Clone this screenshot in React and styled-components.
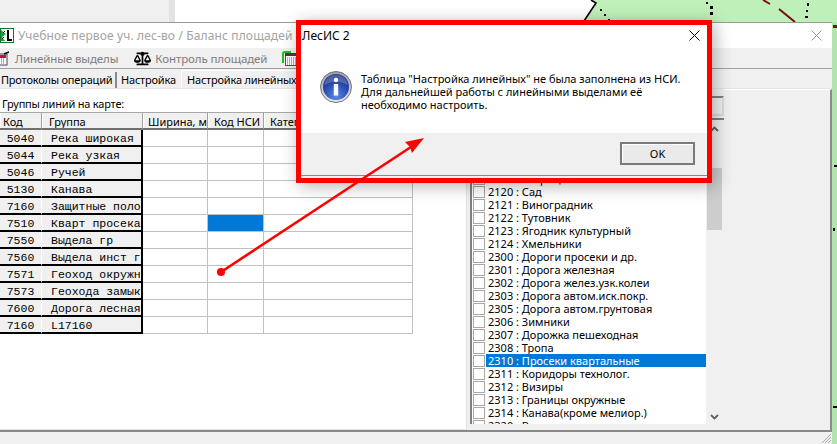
import React from 'react';
import styled, { createGlobalStyle } from 'styled-components';
import { FaBalanceScale } from 'react-icons/fa';

const uiFont = '"Noto Sans", "Open Sans", sans-serif';
const monoFont = '"Liberation Mono", monospace';

const GlobalStyle = createGlobalStyle`
  html, body {
    margin: 0;
    padding: 0;
    overflow: hidden;
    background: #fff;
  }
  * {
    box-sizing: border-box;
  }
`;

const Page = styled.div`
  position: relative;
  width: 837px;
  height: 444px;
  display: flex;
  flex-direction: column;
  overflow: hidden;
  font-family: ${uiFont};
  font-size: 11px;
  color: #000;
`;

const TopBar = styled.div`
  height: 22px;
  display: flex;
  flex: none;
`;

const LeftPane = styled.div`
  width: 169px;
  background: #f0f0f0;
`;

const Splitter = styled.div`
  width: 6px;
  background: #e3e3e3;
`;

const MapPane = styled.div`
  flex: 1;
  background: #fff;
  svg {
    display: block;
  }
`;

const Desktop = styled.div`
  flex: 1;
  display: flex;
  min-height: 0;
`;

const MapStrip = styled.div`
  width: 5px;
  background: #b0e5ad;
  svg {
    display: block;
  }
`;

const Window = styled.div`
  width: 832px;
  display: flex;
  flex-direction: column;
  background: #f0f0f0;
  border-top: 1px solid #9a9a9a;
`;

const TitleBar = styled.div`
  height: 25px;
  flex: none;
  background: #fff;
  display: flex;
  align-items: center;
  color: #a3a3a3;
  font-size: 12px;
  letter-spacing: 0.13px;
  padding-right: 10px;
  span {
    margin-left: 4px;
  }
  svg:last-child {
    margin-left: auto;
  }
`;

const Toolbar = styled.div`
  height: 21px;
  flex: none;
  display: flex;
  align-items: center;
  border-bottom: 1px solid #a0a0a0;
  color: #7d7d7d;
  font-size: 11.5px;
  letter-spacing: -0.1px;
`;

const ToolItem = styled.div`
  display: flex;
  align-items: center;
  gap: ${(p) => p.$gap}px;
  margin-left: ${(p) => p.$left}px;
  white-space: nowrap;
`;

const Tabs = styled.div`
  height: 20px;
  flex: none;
  display: flex;
  align-items: flex-start;
  overflow: hidden;
  letter-spacing: -0.2px;
  border-bottom: 1px solid #e4e4e4;
`;

const Tab = styled.div`
  width: ${(p) => p.$width}px;
  height: ${(p) => (p.$active ? 19 : 18)}px;
  margin-top: ${(p) => (p.$active ? 1 : 3)}px;
  padding-left: ${(p) => p.$pad}px;
  padding-top: ${(p) => (p.$active ? 1 : 0)}px;
  line-height: 16px;
  white-space: nowrap;
  background: #f0f0f0;
  border-left: ${(p) => (p.$active ? '1px solid #fff' : 'none')};
  border-top: ${(p) => (p.$active ? '1px solid #fff' : 'none')};
  border-right: ${(p) => (p.$active ? '1px solid #ddd' : p.$plain ? 'none' : '2px solid #8a8a8a')};
`;

const Panels = styled.div`
  flex: 1;
  display: flex;
  min-height: 0;
`;

const GridPanel = styled.div`
  width: 467px;
  height: 100%;
  background: #fff;
  border-right: 1px solid #e2e2e2;
  border-bottom: 1px solid #e2e2e2;
  display: flex;
  flex-direction: column;
`;

const Caption = styled.div`
  height: 23px;
  padding: 7px 0 0 2px;
  line-height: 15px;
  letter-spacing: -0.2px;
`;

const GridRow = styled.div`
  display: grid;
  grid-template-columns: 42px 101px 65px 56px 149px;
  height: ${(p) => (p.$head ? 18 : 17)}px;
`;

const HeadCell = styled.div`
  background: #f0f0f0;
  border-top: 1px solid #a8a8a8;
  border-bottom: 2px solid #707070;
  border-right: 1px solid #a0a0a0;
  box-shadow: inset 1px 0 0 #fff;
  padding-left: ${(p) => p.$pad}px;
  line-height: 17px;
  white-space: nowrap;
  overflow: hidden;
`;

const FixedCell = styled.div`
  background: #f0f0f0;
  font-family: ${monoFont};
  font-size: 11.5px;
  line-height: 17px;
  white-space: nowrap;
  overflow: hidden;
  border-bottom: 2px solid #000;
  text-align: ${(p) => (p.$code ? 'center' : 'left')};
  padding-left: ${(p) => (p.$code ? 0 : 9)}px;
  border-right: ${(p) => (p.$code ? '1px solid #fff' : '2px solid #000')};
`;

const DataCell = styled.div`
  background: ${(p) => (p.$selected ? '#0078d7' : '#fff')};
  border-right: 1px solid #c0c0c0;
  border-bottom: 1px solid #c0c0c0;
`;

const FilterPane = styled.div`
  width: 257px;
  height: 100%;
  padding: 7px 0 6px 3px;
  display: flex;
  flex-direction: column;
  gap: 2px;
`;

const FilterInput = styled.div`
  height: 20px;
  flex: none;
  background: #f0f0f0;
  border: 2px solid #dcdcdc;
  border-top-color: #808080;
  border-left-color: #808080;
`;

const ListBox = styled.div`
  flex: 1;
  min-height: 0;
  display: flex;
  overflow: hidden;
  background: #fff;
  border-left: 2px solid #808080;
  border-top: 2px solid #808080;
`;

const Items = styled.div`
  flex: 1;
  min-width: 0;
  padding: 52px 0 0 1px;
  overflow: hidden;
`;

const Item = styled.div`
  height: 13px;
  display: flex;
  align-items: center;
  gap: 1px;
  line-height: 13px;
  white-space: nowrap;
`;

const CheckBox = styled.i`
  width: 12px;
  height: 12px;
  flex: none;
  background: #fff;
  border: 1px solid #a6a6a6;
`;

const ItemLabel = styled.div`
  flex: 1;
  height: 13px;
  padding-left: 2px;
  background: ${(p) => (p.$selected ? '#0078d7' : 'transparent')};
  color: ${(p) => (p.$selected ? '#fff' : '#000')};
`;

const ScrollBar = styled.div`
  width: 18px;
  flex: none;
  display: flex;
  flex-direction: column;
  align-items: center;
  padding: 6px 2px 4px 1px;
  background: #f0f0f0;
`;

const Thumb = styled.div`
  width: 15px;
  height: 62px;
  margin-top: 36px;
  background: #cdcdcd;
`;

const ArrowButton = styled.div`
  line-height: 0;
  margin-top: ${(p) => (p.$down ? 'auto' : 0)};
`;

const SidePane = styled.div`
  flex: 1;
  height: 100%;
  border-top: 1px solid #fff;
  border-right: 2px solid #8c8c8c;
`;

const StatusBar = styled.div`
  height: 14px;
  flex: none;
  display: flex;
  justify-content: flex-end;
  align-items: flex-end;
  border-top: 2px solid #8a8a8a;
`;

const Dialog = styled.div`
  position: absolute;
  left: 296px;
  top: 20px;
  width: 416px;
  height: 163px;
  border: 5px solid #ff0000;
  background: #f0f0f0;
  display: flex;
  flex-direction: column;
  box-shadow: 3px 3px 16px rgba(0, 0, 0, 0.3);
`;

const DialogBody = styled.div`
  height: 108px;
  flex: none;
  background: #fff;
`;

const DialogTitle = styled.div`
  height: 21px;
  display: flex;
  align-items: center;
  justify-content: space-between;
  padding: 0 7px 0 1px;
  font-size: 12px;
`;

const Message = styled.div`
  display: flex;
  gap: 9px;
  margin: 25px 0 0 19px;
  svg {
    flex: none;
  }
`;

const MessageText = styled.div`
  line-height: 13px;
  font-size: 11px;
  margin-top: 1px;
`;

const DialogFooter = styled.div`
  height: 43px;
  flex: none;
  display: flex;
  justify-content: flex-end;
  padding: 9px 12px 0 0;
  border-bottom: 1px solid #8a8a8a;
`;

const OkButton = styled.div`
  width: 75px;
  height: 23px;
  background: #eaeaea;
  border: 2px solid #7a7a7a;
  box-shadow: inset 1px 1px 0 #fff;
  text-align: center;
  line-height: 19px;
  font-size: 11px;
`;

const Overlay = styled.svg`
  position: absolute;
  left: 0;
  top: 0;
  pointer-events: none;
`;

const rows = [
  ['5040', 'Река широкая'],
  ['5044', 'Река узкая'],
  ['5046', 'Ручей'],
  ['5130', 'Канава'],
  ['7160', 'Защитные полосы'],
  ['7510', 'Кварт просека'],
  ['7550', 'Выдела гр'],
  ['7560', 'Выдела инст гр'],
  ['7571', 'Геоход окружн'],
  ['7573', 'Геохода замык'],
  ['7600', 'Дорога лесная'],
  ['7160', 'L17160'],
];

const items = [
  '2116 : Старица',
  '2120 : Сад',
  '2121 : Виноградник',
  '2122 : Тутовник',
  '2123 : Ягодник культурный',
  '2124 : Хмельники',
  '2300 : Дороги просеки и др.',
  '2301 : Дорога железная',
  '2302 : Дорога желез.узк.колеи',
  '2303 : Дорога автом.иск.покр.',
  '2305 : Дорога автом.грунтовая',
  '2306 : Зимники',
  '2307 : Дорожка пешеходная',
  '2308 : Тропа',
  '2310 : Просеки квартальные',
  '2311 : Коридоры технолог.',
  '2312 : Визиры',
  '2313 : Границы окружные',
  '2314 : Канава(кроме мелиор.)',
  '2320 : Водоем',
];

const CloseIcon = ({ color }) => (
  <svg width="11" height="11" viewBox="0 0 11 11">
    <path d="M0.5 0.5 L10.5 10.5 M10.5 0.5 L0.5 10.5" stroke={color} strokeWidth="1" fill="none" />
  </svg>
);

const AppIcon = () => (
  <svg width="14" height="15" viewBox="0 0 14 15">
    <rect x="0.5" y="0.5" width="13" height="14" fill="#fff" stroke="#0a7a2a" />
    <path d="M1 2 L6 6 L2 9 L5 13 L1 13 Z" fill="#18a040" />
    <path d="M7 2 L9 2 L9 11 L12 11 L12 13 L7 13 Z" fill="#000" />
    <path d="M3 5 L5 3 M2 11 L4 9" stroke="#000" strokeWidth="1" />
  </svg>
);

const LinesIcon = () => (
  <svg width="9" height="15" viewBox="0 0 9 15">
    <rect x="-5" y="3" width="12" height="11" fill="#fff" stroke="#404060" />
    <rect x="-4" y="4" width="10" height="3" fill="#a02040" />
    <path d="M1 8 H5 M1 10 H5 M1 12 H5" stroke="#b03050" strokeWidth="1" strokeDasharray="1 1" />
    <path d="M4 3 L9 1" stroke="#000" strokeWidth="1.4" />
  </svg>
);

const CalcIcon = () => (
  <svg width="16" height="15" viewBox="0 0 16 15">
    <path d="M1 12 V2 Q1 1 3 1 H9" stroke="#20c020" strokeWidth="2" fill="none" />
    <rect x="3.5" y="2.5" width="12" height="12" fill="#fff" stroke="#c02030" />
    <rect x="3" y="2" width="13" height="3" fill="#404040" />
    <path d="M5 7 H15 M5 9 H15 M5 11 H15 M5 13 H15" stroke="#e03040" strokeWidth="1" strokeDasharray="1 1" />
  </svg>
);

const InfoIcon = () => (
  <svg width="32" height="32" viewBox="0 0 32 32">
    <defs>
      <radialGradient id="infoBlue" cx="50%" cy="85%" r="75%">
        <stop offset="0%" stopColor="#5c8be0" />
        <stop offset="60%" stopColor="#2a4fb8" />
        <stop offset="100%" stopColor="#1c2f8c" />
      </radialGradient>
      <linearGradient id="infoRing" x1="0" y1="0" x2="0" y2="1">
        <stop offset="0%" stopColor="#9aa0a8" />
        <stop offset="100%" stopColor="#e6e8ec" />
      </linearGradient>
    </defs>
    <circle cx="16" cy="16" r="15.5" fill="url(#infoRing)" stroke="#70767e" strokeWidth="1" />
    <circle cx="16" cy="16" r="13" fill="url(#infoBlue)" />
    <path d="M4 14 Q16 7 28 14 Q26 4 16 3.5 Q6 4 4 14 Z" fill="#ffffff" opacity="0.22" />
    <circle cx="16" cy="9" r="2.2" fill="#fff" />
    <path d="M13.8 13 H18.2 V24.5 H13.8 Z" fill="#fff" />
  </svg>
);

const Chevron = ({ down }) => (
  <svg width="9" height="6" viewBox="0 0 9 6">
    <path d={down ? 'M1 1 L4.5 4.5 L8 1' : 'M1 5 L4.5 1.5 L8 5'} stroke="#606060" strokeWidth="1.8" fill="none" />
  </svg>
);

const Grip = () => (
  <svg width="12" height="12" viewBox="0 0 12 12">
    <path d="M11 2 L2 11 M11 5 L5 11 M11 8 L8 11" stroke="#a8a8a8" strokeWidth="1" fill="none" />
  </svg>
);

const TopMap = () => (
  <svg width="662" height="22" viewBox="175 0 662 22">
    <polygon points="591,0 596,3 583,22 837,22 837,0" fill="#c0f0b9" />
    <path d="M591 0 L596 3 L584 21" stroke="#000" strokeWidth="1.6" fill="none" />
    <path d="M763 0 L770 4 M779 9 L795 22" stroke="#7a0c0c" strokeWidth="2" fill="none" />
    <g fill="#000">
      <rect x="600" y="9" width="2" height="2" />
      <rect x="604" y="14" width="2" height="2" />
      <rect x="608" y="19" width="2" height="2" />
      <rect x="706" y="2" width="2" height="2" />
      <rect x="710" y="6" width="3" height="3" />
      <rect x="710" y="12" width="3" height="3" />
      <rect x="807" y="3" width="2" height="3" />
      <rect x="806" y="10" width="2" height="2" />
      <rect x="805" y="16" width="3" height="2" />
    </g>
  </svg>
);

const SideMap = () => (
  <svg width="5" height="422" viewBox="832 22 5 422">
    <rect x="833" y="25" width="4" height="3" fill="#7a0c0c" />
    <g fill="#000">
      <rect x="834" y="165" width="3" height="2" />
      <rect x="833" y="228" width="2" height="3" />
      <rect x="833" y="406" width="4" height="2" />
    </g>
  </svg>
);

const Annotation = () => (
  <Overlay width="837" height="444" viewBox="0 0 837 444">
    <path d="M221 272 L414 145" stroke="#ff0000" strokeWidth="2.6" fill="none" />
    <circle cx="221" cy="272" r="4" fill="#ff0000" />
    <polygon points="424,138 405,142 410,147 412,153" fill="#ff0000" />
  </Overlay>
);

const App = () => (
  <Page>
    <GlobalStyle />
    <TopBar>
      <LeftPane />
      <Splitter />
      <MapPane>
        <TopMap />
      </MapPane>
    </TopBar>
    <Desktop>
      <Window>
        <TitleBar>
          <AppIcon />
          <span>Учебное первое уч. лес-во / Баланс площадей</span>
          <CloseIcon color="#9a9a9a" />
        </TitleBar>
        <Toolbar>
          <ToolItem $gap={6} $left={0}>
            <LinesIcon />
            Линейные выделы
          </ToolItem>
          <ToolItem $gap={4} $left={16}>
            <FaBalanceScale size={17} color="#000" />
            Контроль площадей
          </ToolItem>
          <ToolItem $gap={5} $left={15}>
            <CalcIcon />
          </ToolItem>
        </Toolbar>
        <Tabs>
          <Tab $width={117} $pad={1}>
            Протоколы операций
          </Tab>
          <Tab $width={64} $pad={4} $plain>
            Настройка
          </Tab>
          <Tab $width={230} $pad={5} $active>
            Настройка линейных выделов
          </Tab>
        </Tabs>
        <Panels>
          <GridPanel>
            <Caption>Группы линий на карте:</Caption>
            <GridRow $head>
              <HeadCell $pad={3}>Код</HeadCell>
              <HeadCell $pad={7}>Группа</HeadCell>
              <HeadCell $pad={5}>Ширина, м</HeadCell>
              <HeadCell $pad={6}>Код НСИ</HeadCell>
              <HeadCell $pad={6}>Категория</HeadCell>
            </GridRow>
            {rows.map(([code, name], i) => (
              <GridRow key={`${code}-${name}`}>
                <FixedCell $code>{code}</FixedCell>
                <FixedCell>{name}</FixedCell>
                <DataCell />
                <DataCell $selected={i === 5} />
                <DataCell />
              </GridRow>
            ))}
          </GridPanel>
          <FilterPane>
            <FilterInput />
            <ListBox>
              <Items>
                {items.map((item) => (
                  <Item key={item}>
                    <CheckBox />
                    <ItemLabel $selected={item.startsWith('2310')}>{item}</ItemLabel>
                  </Item>
                ))}
              </Items>
              <ScrollBar>
                <ArrowButton>
                  <Chevron />
                </ArrowButton>
                <Thumb />
                <ArrowButton $down>
                  <Chevron down />
                </ArrowButton>
              </ScrollBar>
            </ListBox>
          </FilterPane>
          <SidePane />
        </Panels>
        <StatusBar>
          <Grip />
        </StatusBar>
      </Window>
      <MapStrip>
        <SideMap />
      </MapStrip>
    </Desktop>
    <Dialog>
      <DialogBody>
        <DialogTitle>
          ЛесИС 2
          <CloseIcon color="#000" />
        </DialogTitle>
        <Message>
          <InfoIcon />
          <MessageText>
            Таблица "Настройка линейных" не была заполнена из НСИ.
            <br />
            Для дальнейшей работы с линейными выделами её
            <br />
            необходимо настроить.
          </MessageText>
        </Message>
      </DialogBody>
      <DialogFooter>
        <OkButton>OK</OkButton>
      </DialogFooter>
    </Dialog>
    <Annotation />
  </Page>
);

export default App;
